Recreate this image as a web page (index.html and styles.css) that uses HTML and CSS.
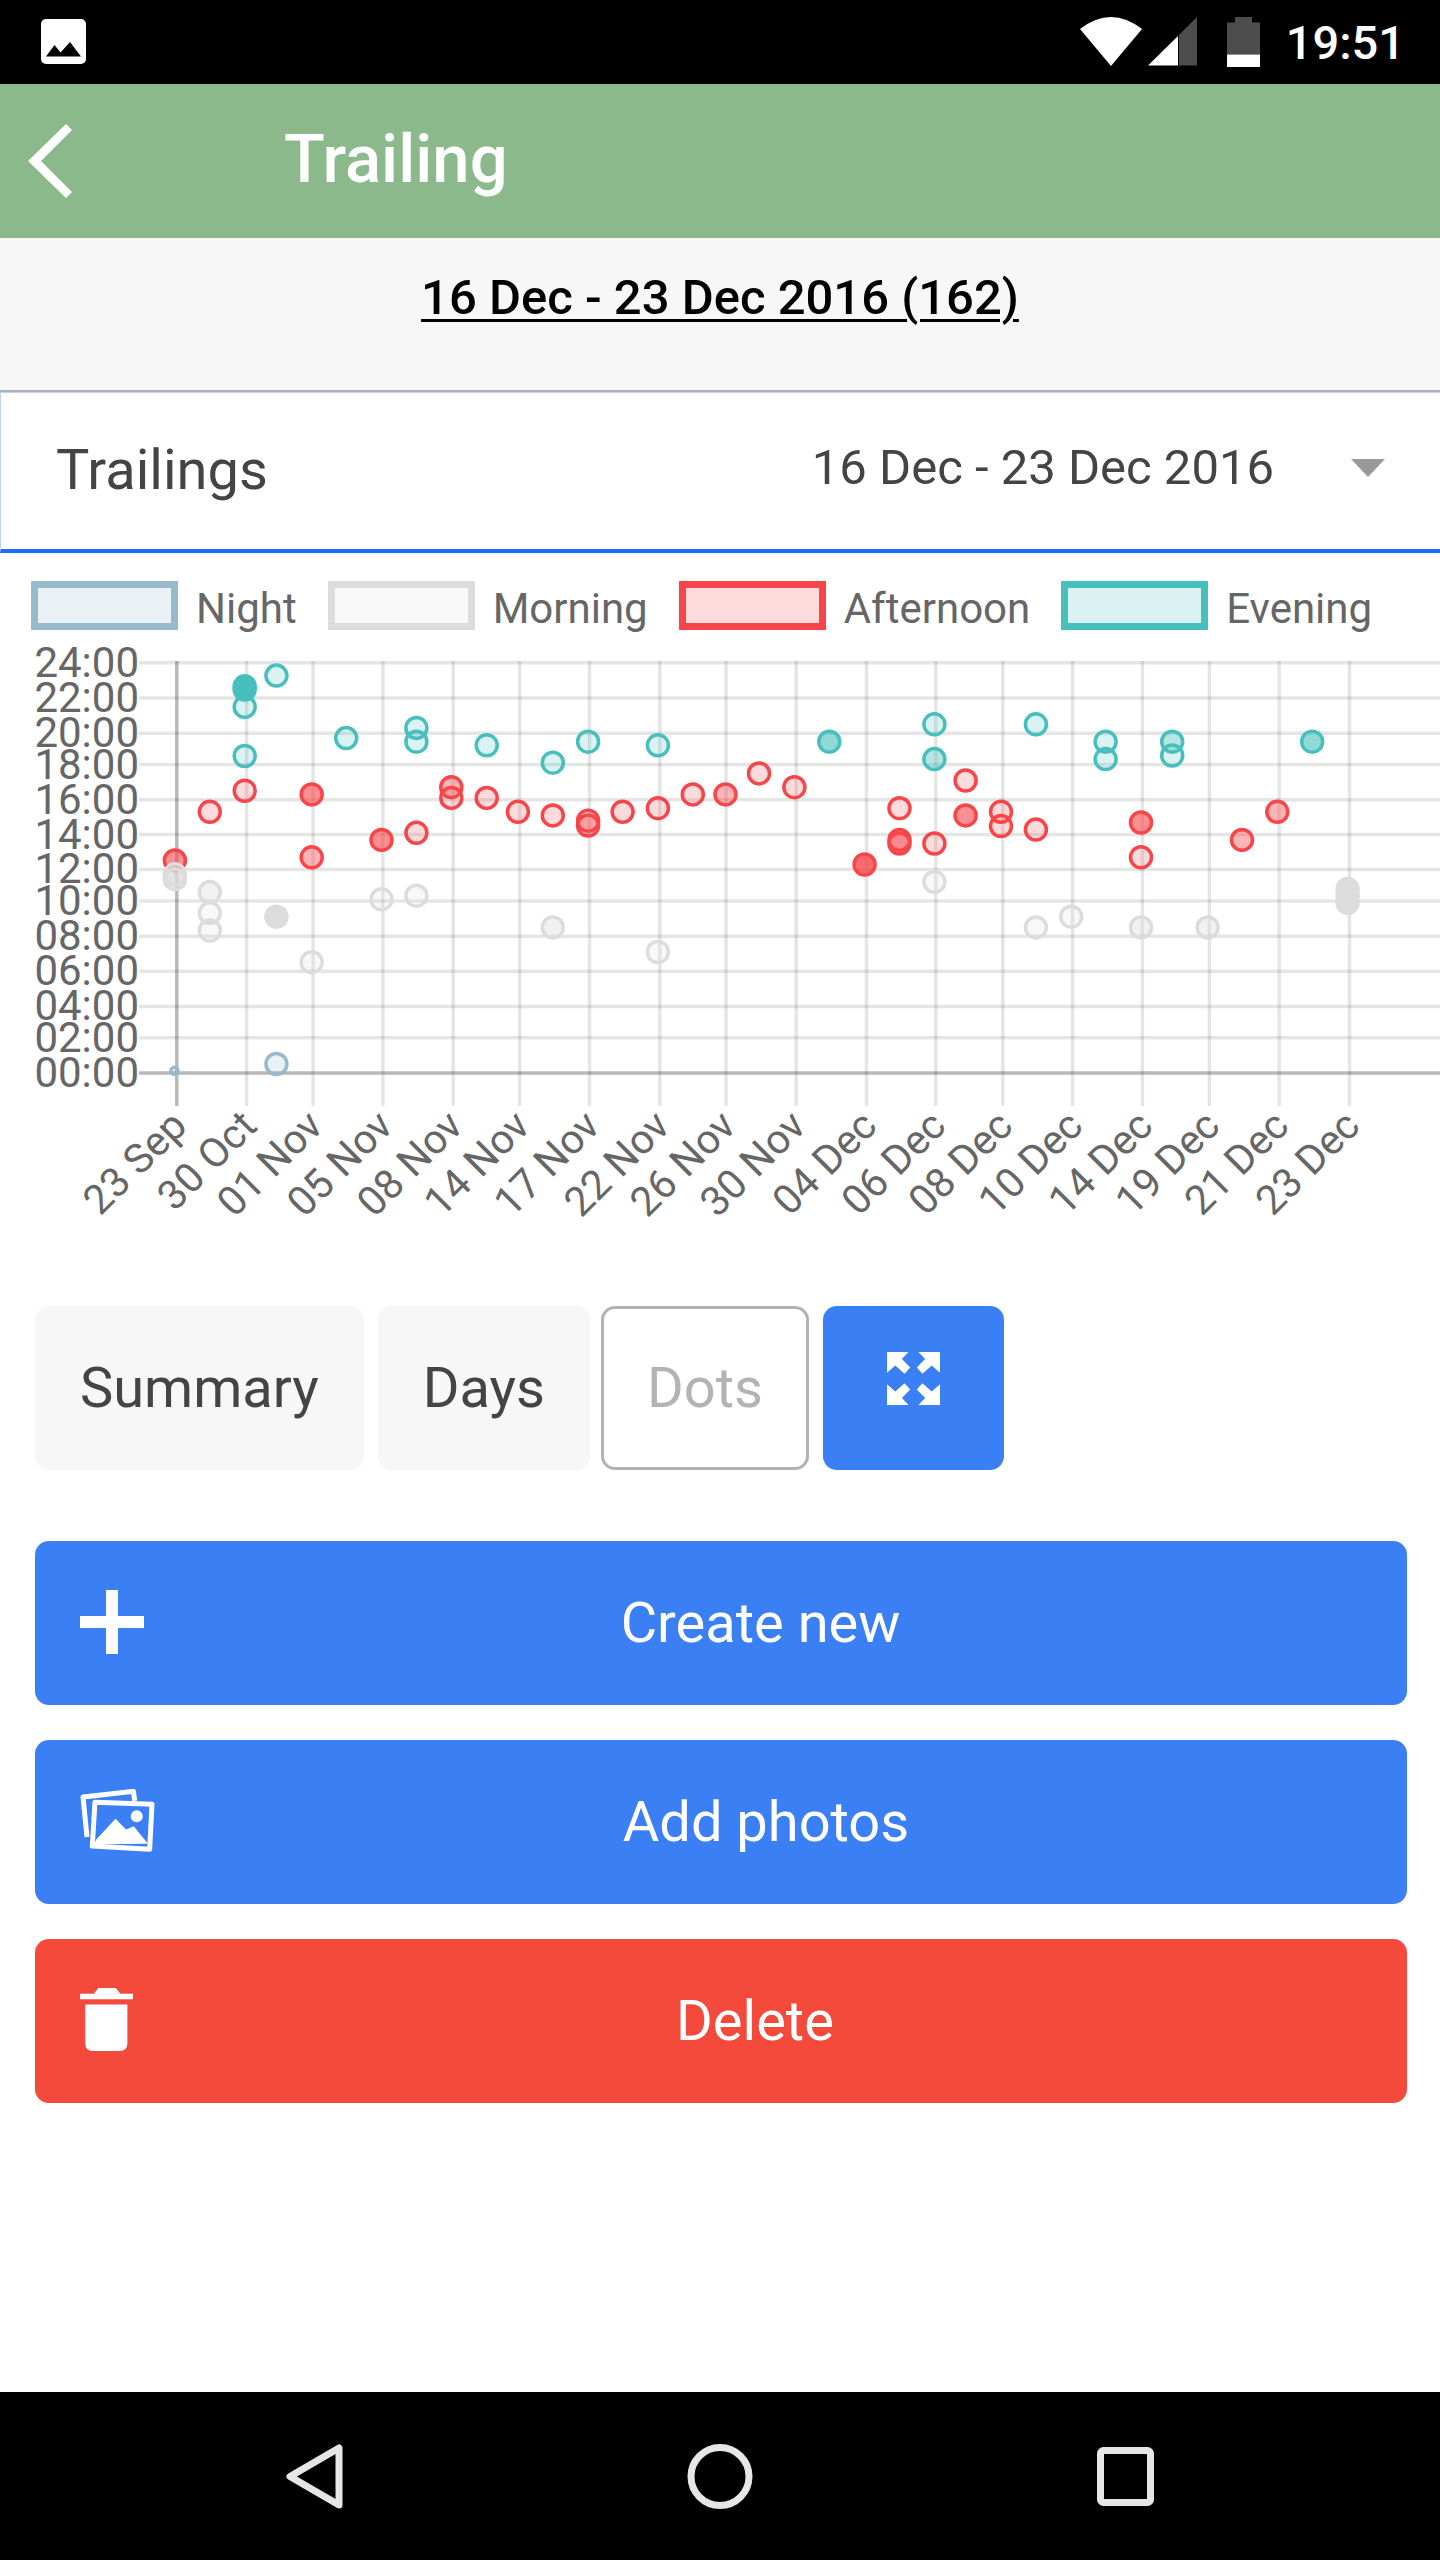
FILE: index.html
```html
<!DOCTYPE html>
<html lang="en">
<head>
    <meta charset="UTF-8">
    <meta name="viewport" content="width=device-width, initial-scale=1.0">
    <title>Trailing</title>
    <link rel="stylesheet" href="styles.css">
</head>
<body>

    <!-- Android status bar -->
    <div class="status-bar">
        <svg class="status-photo" viewBox="0 0 45 45">
            <rect width="45" height="45" rx="5" fill="#fff"/>
            <path d="M5 37.5L13.5 26L19.5 33.5L29 23L40 37.5Z" fill="#000"/>
        </svg>
        <div class="status-right">
            <svg class="status-wifi" viewBox="0 0 62 49">
                <path d="M0 12Q31 -12 62 12L31 49Z" fill="#fff"/>
            </svg>
            <svg class="status-signal" viewBox="0 0 49 49">
                <path d="M0 48.5L30 19V48.5Z" fill="#fff"/>
                <path d="M31 18L49 0V48.5H31Z" fill="#4d4d4d"/>
            </svg>
            <svg class="status-battery" viewBox="0 0 33 50">
                <path d="M8 0H25V5.5H33V37.5H0V5.5H8Z" fill="#4d4d4d"/>
                <rect y="37.5" width="33" height="12.5" fill="#fff"/>
            </svg>
            <span class="status-time">19:51</span>
        </div>
    </div>

    <!-- Title bar -->
    <header class="title-bar">
        <svg class="back-icon" viewBox="0 0 44 74">
            <path d="M38 0L44 6L13 37L44 68L38 74L0 37Z" fill="#fff"/>
        </svg>
        <h1>Trailing</h1>
    </header>

    <div class="period">
        <span class="period-link">16 Dec - 23 Dec 2016 (162)</span>
    </div>

    <!-- Period select -->
    <div class="select-row">
        <span class="select-label">Trailings</span>
        <span class="select-value">16 Dec - 23 Dec 2016</span>
        <span class="select-caret"></span>
    </div>

    <!-- Chart -->
    <div class="legend">
        <div class="legend-item"><span class="legend-box box-night"></span>Night</div>
        <div class="legend-item"><span class="legend-box box-morning"></span>Morning</div>
        <div class="legend-item"><span class="legend-box box-afternoon"></span>Afternoon</div>
        <div class="legend-item"><span class="legend-box box-evening"></span>Evening</div>
    </div>

    <svg class="chart" viewBox="0 636 1440 624">
        <g class="grid">
            <line x1="139" x2="1440" y1="662.7" y2="662.7"/>
            <line x1="139" x2="1440" y1="697.9" y2="697.9"/>
            <line x1="139" x2="1440" y1="733.2" y2="733.2"/>
            <line x1="139" x2="1440" y1="764.5" y2="764.5"/>
            <line x1="139" x2="1440" y1="799.7" y2="799.7"/>
            <line x1="139" x2="1440" y1="834.6" y2="834.6"/>
            <line x1="139" x2="1440" y1="869.4" y2="869.4"/>
            <line x1="139" x2="1440" y1="901.1" y2="901.1"/>
            <line x1="139" x2="1440" y1="936.3" y2="936.3"/>
            <line x1="139" x2="1440" y1="971.2" y2="971.2"/>
            <line x1="139" x2="1440" y1="1006.4" y2="1006.4"/>
            <line x1="139" x2="1440" y1="1037.7" y2="1037.7"/>
            <line class="axis" x1="139" x2="1440" y1="1073" y2="1073"/>

            <line class="axis" x1="176.8" x2="176.8" y1="661" y2="1106"/>
            <line x1="246.6" x2="246.6" y1="661" y2="1106"/>
            <line x1="313.1" x2="313.1" y1="661" y2="1106"/>
            <line x1="382.9" x2="382.9" y1="661" y2="1106"/>
            <line x1="453.2" x2="453.2" y1="661" y2="1106"/>
            <line x1="519.7" x2="519.7" y1="661" y2="1106"/>
            <line x1="589.5" x2="589.5" y1="661" y2="1106"/>
            <line x1="659.8" x2="659.8" y1="661" y2="1106"/>
            <line x1="726" x2="726" y1="661" y2="1106"/>
            <line x1="796.2" x2="796.2" y1="661" y2="1106"/>
            <line x1="866.5" x2="866.5" y1="661" y2="1106"/>
            <line x1="935.8" x2="935.8" y1="661" y2="1106"/>
            <line x1="1002.8" x2="1002.8" y1="661" y2="1106"/>
            <line x1="1072.6" x2="1072.6" y1="661" y2="1106"/>
            <line x1="1142.4" x2="1142.4" y1="661" y2="1106"/>
            <line x1="1209.4" x2="1209.4" y1="661" y2="1106"/>
            <line x1="1279.2" x2="1279.2" y1="661" y2="1106"/>
            <line x1="1349.5" x2="1349.5" y1="661" y2="1106"/>
        </g>

        <g class="y-ticks">
            <text x="139" y="677">24:00</text>
            <text x="139" y="712">22:00</text>
            <text x="139" y="747">20:00</text>
            <text x="139" y="779">18:00</text>
            <text x="139" y="814">16:00</text>
            <text x="139" y="849">14:00</text>
            <text x="139" y="883">12:00</text>
            <text x="139" y="915">10:00</text>
            <text x="139" y="950">08:00</text>
            <text x="139" y="985">06:00</text>
            <text x="139" y="1020">04:00</text>
            <text x="139" y="1052">02:00</text>
            <text x="139" y="1087">00:00</text>
        </g>

        <g class="x-ticks">
            <text transform="translate(189 1128) rotate(-45)">23 Sep</text>
            <text transform="translate(259 1128) rotate(-45)">30 Oct</text>
            <text transform="translate(325 1128) rotate(-45)">01 Nov</text>
            <text transform="translate(395 1128) rotate(-45)">05 Nov</text>
            <text transform="translate(465 1128) rotate(-45)">08 Nov</text>
            <text transform="translate(532 1128) rotate(-45)">14 Nov</text>
            <text transform="translate(602 1128) rotate(-45)">17 Nov</text>
            <text transform="translate(672 1128) rotate(-45)">22 Nov</text>
            <text transform="translate(738 1128) rotate(-45)">26 Nov</text>
            <text transform="translate(808 1128) rotate(-45)">30 Nov</text>
            <text transform="translate(879 1128) rotate(-45)">04 Dec</text>
            <text transform="translate(948 1128) rotate(-45)">06 Dec</text>
            <text transform="translate(1015 1128) rotate(-45)">08 Dec</text>
            <text transform="translate(1085 1128) rotate(-45)">10 Dec</text>
            <text transform="translate(1155 1128) rotate(-45)">14 Dec</text>
            <text transform="translate(1222 1128) rotate(-45)">19 Dec</text>
            <text transform="translate(1291 1128) rotate(-45)">21 Dec</text>
            <text transform="translate(1362 1128) rotate(-45)">23 Dec</text>
        </g>

        <!-- Night -->
        <g class="dots night">
            <circle class="tiny" cx="174.5" cy="1070.7"/>
            <circle cx="276.4" cy="1064"/>
        </g>

        <!-- Morning -->
        <g class="dots morning">
            <circle class="x2" cx="209.8" cy="892.1"/>
            <circle cx="209.8" cy="913.1"/>
            <circle cx="209.8" cy="930.5"/>
            <circle class="solid" cx="276.4" cy="916.7"/>
            <circle cx="311.7" cy="962.2"/>
            <circle cx="381.5" cy="899.3"/>
            <circle cx="416.4" cy="895.7"/>
            <circle class="x2" cx="552.8" cy="927.4"/>
            <circle cx="657.9" cy="952"/>
            <circle cx="934.4" cy="881.9"/>
            <circle cx="1035.9" cy="927.4"/>
            <circle cx="1071.2" cy="916.7"/>
            <circle class="x2" cx="1141" cy="927.4"/>
            <circle class="x2" cx="1207.6" cy="927.4"/>
            <circle class="solid" cx="1347.6" cy="889"/>
            <circle class="solid" cx="1347.6" cy="895.7"/>
            <circle class="solid" cx="1347.6" cy="902.9"/>
        </g>

        <!-- Afternoon -->
        <g class="dots afternoon">
            <circle class="x3" cx="174.9" cy="860.4"/>
            <circle cx="209.8" cy="811.8"/>
            <circle cx="244.7" cy="790.8"/>
            <circle class="x3" cx="311.7" cy="794.4"/>
            <circle class="x2" cx="311.7" cy="857.3"/>
            <circle class="x3" cx="381.5" cy="839.9"/>
            <circle cx="416.4" cy="832.8"/>
            <circle class="x2" cx="451.3" cy="787.2"/>
            <circle cx="451.3" cy="797.9"/>
            <circle cx="486.7" cy="797.9"/>
            <circle cx="517.9" cy="811.8"/>
            <circle cx="552.8" cy="815.4"/>
            <circle cx="588.1" cy="820.7"/>
            <circle class="x2" cx="588.1" cy="825.6"/>
            <circle cx="622.6" cy="811.8"/>
            <circle cx="657.9" cy="808.2"/>
            <circle cx="692.8" cy="794.4"/>
            <circle class="x2" cx="725.5" cy="794.4"/>
            <circle cx="759" cy="773.4"/>
            <circle cx="794.4" cy="787.2"/>
            <circle class="x5" cx="864.6" cy="864.5"/>
            <circle cx="899.5" cy="808.2"/>
            <circle class="x2" cx="899.5" cy="839.9"/>
            <circle class="x2" cx="899.5" cy="843.5"/>
            <circle cx="934.4" cy="843.5"/>
            <circle cx="965.6" cy="780.5"/>
            <circle class="x3" cx="965.6" cy="815.4"/>
            <circle cx="1001" cy="811.8"/>
            <circle cx="1001" cy="826.1"/>
            <circle cx="1035.9" cy="829.6"/>
            <circle class="x3" cx="1141" cy="822.5"/>
            <circle cx="1141" cy="857.3"/>
            <circle class="x2" cx="1242" cy="839.9"/>
            <circle class="x2" cx="1277.3" cy="811.8"/>
        </g>

        <!-- Morning dots that sit over the afternoon ones -->
        <g class="dots morning">
            <circle class="x2" cx="174.9" cy="874.3"/>
            <circle class="x3" cx="174.9" cy="879.2"/>
        </g>

        <!-- Evening -->
        <g class="dots evening">
            <circle class="solid" cx="244.7" cy="686.3"/>
            <circle class="solid" cx="244.7" cy="689.5"/>
            <circle cx="276.4" cy="675.6"/>
            <circle cx="244.7" cy="706.9"/>
            <circle cx="244.7" cy="756"/>
            <circle cx="346.2" cy="738.1"/>
            <circle cx="416.4" cy="727.9"/>
            <circle cx="416.4" cy="741.7"/>
            <circle cx="486.7" cy="745.3"/>
            <circle cx="552.8" cy="762.7"/>
            <circle cx="588.1" cy="741.7"/>
            <circle cx="657.9" cy="745.3"/>
            <circle class="x3" cx="829.3" cy="741.7"/>
            <circle cx="934.4" cy="724.3"/>
            <circle class="x2" cx="934.4" cy="759.1"/>
            <circle cx="1035.9" cy="724.3"/>
            <circle cx="1105.6" cy="741.7"/>
            <circle cx="1105.6" cy="759.1"/>
            <circle class="x2" cx="1172.2" cy="741.7"/>
            <circle cx="1172.2" cy="755.5"/>
            <circle class="x3" cx="1312.2" cy="741.7"/>
        </g>
    </svg>

    <!-- View switch -->
    <div class="view-row">
        <button class="view-btn">Summary</button>
        <button class="view-btn">Days</button>
        <button class="view-btn view-btn-active">Dots</button>
        <button class="expand-btn">
            <svg viewBox="47 37 160 160">
                <path d="M47 37H112L92 58L117 84L100 103L72 78L47 100Z"/>
                <path d="M207 37H142L162 58L137 84L154 103L182 78L207 100Z"/>
                <path d="M47 197H112L92 176L117 150L100 131L72 156L47 134Z"/>
                <path d="M207 197H142L162 176L137 150L154 131L182 156L207 134Z"/>
            </svg>
        </button>
    </div>

    <!-- Actions -->
    <div class="actions">
        <button class="action-btn btn-blue">
            <svg class="icon-plus" viewBox="0 0 64 64">
                <path d="M26 0H38V26H64V38H38V64H26V38H0V26H26Z"/>
            </svg>
            <span class="action-label">Create new</span>
        </button>
        <button class="action-btn btn-blue">
            <svg class="icon-photos" viewBox="44 38 224 190">
                <path class="photo-line" d="M64 183L52 62L204 45L208 74"/>
                <path class="photo-line" d="M88 78L260 84L253 220L80 210Z"/>
                <path d="M92 190L150 128L182 160L205 150L248 203L85 205Z"/>
                <circle cx="214" cy="120" r="18"/>
            </svg>
            <span class="action-label">Add photos</span>
        </button>
        <button class="action-btn btn-red">
            <svg class="icon-trash" viewBox="30 38 160 190">
                <path d="M72 55L85 38H138L152 55H190V72H30V55Z"/>
                <path d="M46 88H173V205Q173 228 150 228H69Q46 228 46 205Z"/>
            </svg>
            <span class="action-label">Delete</span>
        </button>
    </div>

    <div class="spacer"></div>

    <!-- Android navigation bar -->
    <nav class="nav-bar">
        <svg class="nav-back" viewBox="0 0 57 65">
            <path d="M4 32.5L53 4V61Z"/>
        </svg>
        <svg class="nav-home" viewBox="0 0 66 65">
            <circle cx="33" cy="32.5" r="29"/>
        </svg>
        <svg class="nav-recent" viewBox="0 0 57 59">
            <rect x="3.5" y="3.5" width="50" height="52" rx="3"/>
        </svg>
    </nav>

</body>
</html>
```

FILE: styles.css
```css
body {
    margin: 0;
    width: 1440px;
    height: 2560px;
    display: flex;
    flex-direction: column;
    background: #fff;
    font-family: Roboto, "Noto Sans", sans-serif;
    overflow: hidden;
}

svg {
    display: block;
    flex: none;
}

/* Status bar */
.status-bar {
    height: 84px;
    background: #000;
    display: flex;
    align-items: center;
    justify-content: space-between;
    padding: 0 35px 0 41px;
}

.status-photo {
    width: 45px;
    height: 45px;
    margin-bottom: 1px;
}

.status-right {
    display: flex;
    align-items: center;
}

.status-wifi {
    width: 62px;
    height: 49px;
    margin-bottom: 1px;
}

.status-signal {
    width: 49px;
    height: 49px;
    margin-left: 6px;
    margin-bottom: 1px;
}

.status-battery {
    width: 33px;
    height: 50px;
    margin-left: 30px;
    margin-bottom: 1px;
}

.status-time {
    margin-left: 26px;
    color: #fff;
    font-size: 47px;
    font-weight: 500;
}

/* Title bar */
.title-bar {
    height: 154px;
    background: #8bb98c;
    display: flex;
    align-items: center;
    padding-left: 28px;
}

.back-icon {
    width: 44px;
    height: 74px;
}

.title-bar h1 {
    margin: 0 0 4px 212px;
    color: #fff;
    font-size: 67px;
    font-weight: 500;
}

/* Period */
.period {
    height: 121px;
    background: #f7f7f7;
    border-bottom: 2px solid #b0b0b8;
    text-align: center;
    padding-top: 31px;
}

.period-link {
    color: #000;
    font-size: 49px;
    font-weight: 500;
    text-decoration: underline;
    text-decoration-thickness: 3px;
    text-underline-offset: 5px;
}

/* Select */
.select-row {
    height: 156px;
    display: flex;
    align-items: center;
    border-top: 1px solid #bcd4ff;
    border-left: 1px solid #bcd4ff;
    border-bottom: 4px solid #1a6ef5;
    padding: 0 55px 0 55px;
}

.select-label {
    color: #444;
    font-size: 56px;
    margin-bottom: 2px;
}

.select-value {
    margin-left: auto;
    margin-bottom: 8px;
    color: #444;
    font-size: 49px;
}

.select-caret {
    margin-left: 77px;
    margin-bottom: 6px;
    border-left: 17px solid transparent;
    border-right: 17px solid transparent;
    border-top: 18px solid #999;
}

/* Legend */
.legend {
    display: flex;
    height: 55px;
    margin-top: 28px;
    padding-left: 31px;
    gap: 31px;
    color: #666;
    font-size: 42px;
}

.legend-item {
    display: flex;
    align-items: center;
    gap: 18px;
}

.legend-box {
    width: 147px;
    height: 49px;
    margin-bottom: 6px;
    box-sizing: border-box;
    border: 7px solid;
}

.box-night {
    border-color: #97bbcd;
    background: rgba(151, 187, 205, 0.2);
}

.box-morning {
    border-color: #dcdcdc;
    background: rgba(220, 220, 220, 0.2);
}

.box-afternoon {
    border-color: #f7464a;
    background: rgba(247, 70, 74, 0.2);
}

.box-evening {
    border-color: #46bfbd;
    background: rgba(70, 191, 189, 0.2);
}

/* Chart */
.chart {
    width: 1440px;
    height: 624px;
}

.grid line {
    stroke: rgba(0, 0, 0, 0.1);
    stroke-width: 3.5;
}

.grid line.axis {
    stroke: rgba(0, 0, 0, 0.28);
}

.y-ticks text {
    fill: #666;
    font-size: 42px;
    text-anchor: end;
}

.x-ticks text {
    fill: #666;
    font-size: 41px;
    text-anchor: end;
}

.dots circle {
    r: 10.5px;
    stroke-width: 3.5;
    fill-opacity: 0.2;
}

.dots circle.tiny {
    r: 3.5px;
}

.dots circle.x2 {
    fill-opacity: 0.4;
}

.dots circle.x3 {
    fill-opacity: 0.6;
}

.dots circle.x5 {
    fill-opacity: 0.8;
}

.dots circle.solid {
    fill-opacity: 1;
}

.night circle {
    fill: #97bbcd;
    stroke: #97bbcd;
}

.morning circle {
    fill: #dcdcdc;
    stroke: #dcdcdc;
}

.afternoon circle {
    fill: #f7464a;
    stroke: #f7464a;
}

.evening circle {
    fill: #46bfbd;
    stroke: #46bfbd;
}

/* View switch */
.view-row {
    display: flex;
    gap: 14px;
    margin-top: 46px;
    padding-left: 35px;
}

button {
    border: none;
    font-family: inherit;
    font-size: 56px;
    border-radius: 14px;
}

.view-btn {
    height: 164px;
    padding: 0 45px;
    background: #f7f7f7;
    color: #444;
}

.view-btn-active {
    margin-left: -3px;
    padding: 0 43px;
    background: #fff;
    border: 3px solid #b3b3b3;
    color: #b3b3b3;
}

.expand-btn {
    width: 181px;
    height: 164px;
    background: #3b7ff5;
    display: flex;
    justify-content: center;
    padding: 46px 0 0;
}

.expand-btn svg {
    width: 53px;
    height: 53px;
    fill: #fff;
}

/* Actions */
.actions {
    display: flex;
    flex-direction: column;
    gap: 35px;
    margin: 71px 33px 0 35px;
}

.action-btn {
    height: 164px;
    display: flex;
    align-items: center;
    gap: 18px;
    padding: 0 48px 0 45px;
    color: #fff;
}

.action-btn svg {
    fill: #fff;
    margin-bottom: 3px;
}

.btn-blue {
    background: #3b7ff5;
}

.btn-red {
    background: #f44a3c;
}

.action-label {
    flex: 1;
    text-align: center;
}

.icon-plus {
    width: 64px;
    height: 64px;
}

.icon-photos {
    width: 75px;
    height: 63px;
}

.icon-trash {
    width: 53px;
    height: 63px;
}

.photo-line {
    fill: none;
    stroke: #fff;
    stroke-width: 15;
    stroke-linejoin: round;
}

.spacer {
    flex: 1;
}

/* Navigation bar */
.nav-bar {
    height: 168px;
    background: #000;
    display: flex;
    align-items: center;
    justify-content: center;
    gap: 344px;
}

.nav-bar svg {
    fill: none;
    stroke: #e6e6e6;
    stroke-width: 7;
    stroke-linejoin: round;
}

.nav-back {
    width: 57px;
    height: 65px;
}

.nav-home {
    width: 66px;
    height: 65px;
}

.nav-recent {
    width: 57px;
    height: 59px;
}
```
